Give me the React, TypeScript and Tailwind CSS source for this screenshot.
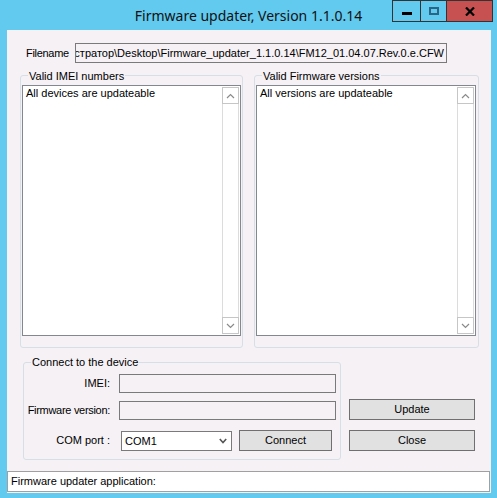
import React from "react";

function Chevron({ dir }: { dir: "up" | "down" }) {
  return (
    <svg width="9" height="6" viewBox="0 0 9 6">
      <path
        d={dir === "up" ? "M1 5 L4.5 1.5 L8 5" : "M1 1 L4.5 4.5 L8 1"}
        fill="none"
        stroke="#8a8a8a"
        strokeWidth="1.2"
      />
    </svg>
  );
}

function ListBox({ w, text }: { w: string; text: string }) {
  return (
    <div className={`${w} h-[251px] border border-[#828790] bg-white flex`}>
      <div className="flex-1 pl-[3px] pt-[1px] leading-[13px]">{text}</div>
      <div className="w-[17px] mt-[1px] mb-[1px] mr-[1px] flex flex-col">
        <div className="h-[17px] border border-[#c6c6c6] flex items-center justify-center">
          <Chevron dir="up" />
        </div>
        <div className="flex-1 border-x border-[#dcdcdc]" />
        <div className="h-[17px] border border-[#c6c6c6] flex items-center justify-center">
          <Chevron dir="down" />
        </div>
      </div>
    </div>
  );
}

function Group({
  w,
  h,
  label,
  top,
  children,
  className = "",
}: {
  w: string;
  h: string;
  label: string;
  top: string;
  children: React.ReactNode;
  className?: string;
}) {
  return (
    <div className={`relative ${w} ${h} border border-[#d5dfe5] rounded-[3px] ${className}`}>
      <span className={`absolute ${top} left-[7px] px-[1px] leading-[13px] bg-[#f5f1f5]`}>{label}</span>
      {children}
    </div>
  );
}

function Btn({ w, h, children }: { w: string; h: string; children: React.ReactNode }) {
  return (
    <div className={`${w} ${h} border border-[#707070] bg-[#e1e1e1] flex items-center justify-center leading-[13px]`}>
      {children}
    </div>
  );
}

function Label({ children, h = "h-[19px]", extra = "" }: { children: React.ReactNode; h?: string; extra?: string }) {
  return (
    <div className={`w-[86px] ${h} shrink-0 flex items-center justify-end whitespace-nowrap leading-[13px] ${extra}`}>
      {children}
    </div>
  );
}

export default function App() {
  return (
    <div className="w-[497px] h-[498px] bg-[#62c9ef] flex flex-col font-['Liberation_Sans',Arial,sans-serif] text-[11px] text-black">
      <div className="h-[30px] grid grid-cols-[1fr_auto_1fr]">
        <div />
        <div className="self-center font-['Noto_Sans',sans-serif] text-[14px] leading-[30px] pt-px text-[#111]">
          Firmware updater, Version 1.1.0.14
        </div>
        <div className="justify-self-end self-start flex mr-[4px]">
          <div className="w-[29px] h-[22px] border border-[#333] flex justify-center">
            <div className="mt-[11px] w-[10px] h-[3px] bg-black" />
          </div>
          <div className="w-[27px] h-[22px] -ml-px border border-[#333] flex justify-center">
            <div className="mt-[6px] w-[10px] h-[8px] border-2 border-[#2b6585]" />
          </div>
          <div className="w-[47px] h-[22px] -ml-px border border-[#333] bg-[#c75050] flex justify-center">
            <svg className="mt-[6px]" width="10" height="9" viewBox="0 0 10 9">
              <path d="M1 0.5 L9 8.5 M9 0.5 L1 8.5" stroke="#000" strokeWidth="2.2" />
            </svg>
          </div>
        </div>
      </div>

      <div className="ml-[7px] w-[484px] h-[463px] bg-[#f5f1f5] flex flex-col">
        <div className="mt-[13px] h-[20px] flex items-center pl-[19px]">
          <span className="w-[49px] shrink-0 whitespace-nowrap leading-[13px] tracking-[-0.3px]">Filename</span>
          <div className="w-[372px] h-[20px] border border-[#7a7a7a] overflow-hidden flex items-center justify-end pr-[2px] whitespace-nowrap leading-[13px]">
            стратор\Desktop\Firmware_updater_1.1.0.14\FM12_01.04.07.Rev.0.e.CFW
          </div>
        </div>

        <div className="mt-[12px] flex pl-[13px] gap-[11px]">
          <Group w="w-[223px]" h="h-[273px]" label="Valid IMEI numbers" top="-top-[6px]" className="pt-[9px] pl-[1px]">
            <ListBox w="w-[219px]" text="All devices are updateable" />
          </Group>
          <Group w="w-[225px]" h="h-[273px]" label="Valid Firmware versions" top="-top-[6px]" className="pt-[9px] pl-[1px]">
            <ListBox w="w-[220px]" text="All versions are updateable" />
          </Group>
        </div>

        <div className="mt-[14px] flex items-start pl-[16px]">
          <Group w="w-[318px]" h="h-[98px]" label="Connect to the device" top="-top-[7px]" className="flex flex-col">
            <div className="mt-[11px] flex items-center h-[19px]">
              <Label>IMEI:</Label>
              <div className="ml-[9px] w-[217px] h-[19px] border border-[#7a7a7a]" />
            </div>
            <div className="mt-[8px] flex items-center h-[19px]">
              <Label extra="tracking-[-0.3px]">Firmware version:</Label>
              <div className="ml-[9px] w-[217px] h-[19px] border border-[#7a7a7a]" />
            </div>
            <div className="mt-[10px] flex items-start">
              <Label h="h-[21px]">COM port :</Label>
              <div className="ml-[11px] mt-[1px] w-[111px] h-[20px] border border-[#7a7a7a] bg-white flex items-center pl-[3px] pr-[4px] leading-[13px]">
                <span className="flex-1">COM1</span>
                <svg width="8" height="6" viewBox="0 0 8 6">
                  <path d="M0.8 1 L4 4.5 L7.2 1" fill="none" stroke="#555" strokeWidth="1.6" />
                </svg>
              </div>
              <div className="ml-[7px]">
                <Btn w="w-[93px]" h="h-[21px]">Connect</Btn>
              </div>
            </div>
          </Group>
          <div className="ml-[8px] pt-[37px] flex flex-col gap-[10px]">
            <Btn w="w-[126px]" h="h-[21px]">Update</Btn>
            <Btn w="w-[126px]" h="h-[21px]">Close</Btn>
          </div>
        </div>

        <div className="mt-[11px] w-[483px] h-[21px] border border-[#a0a0a0] bg-white flex items-center pl-[3px] leading-[13px]">
          Firmware updater application:
        </div>
      </div>
    </div>
  );
}
